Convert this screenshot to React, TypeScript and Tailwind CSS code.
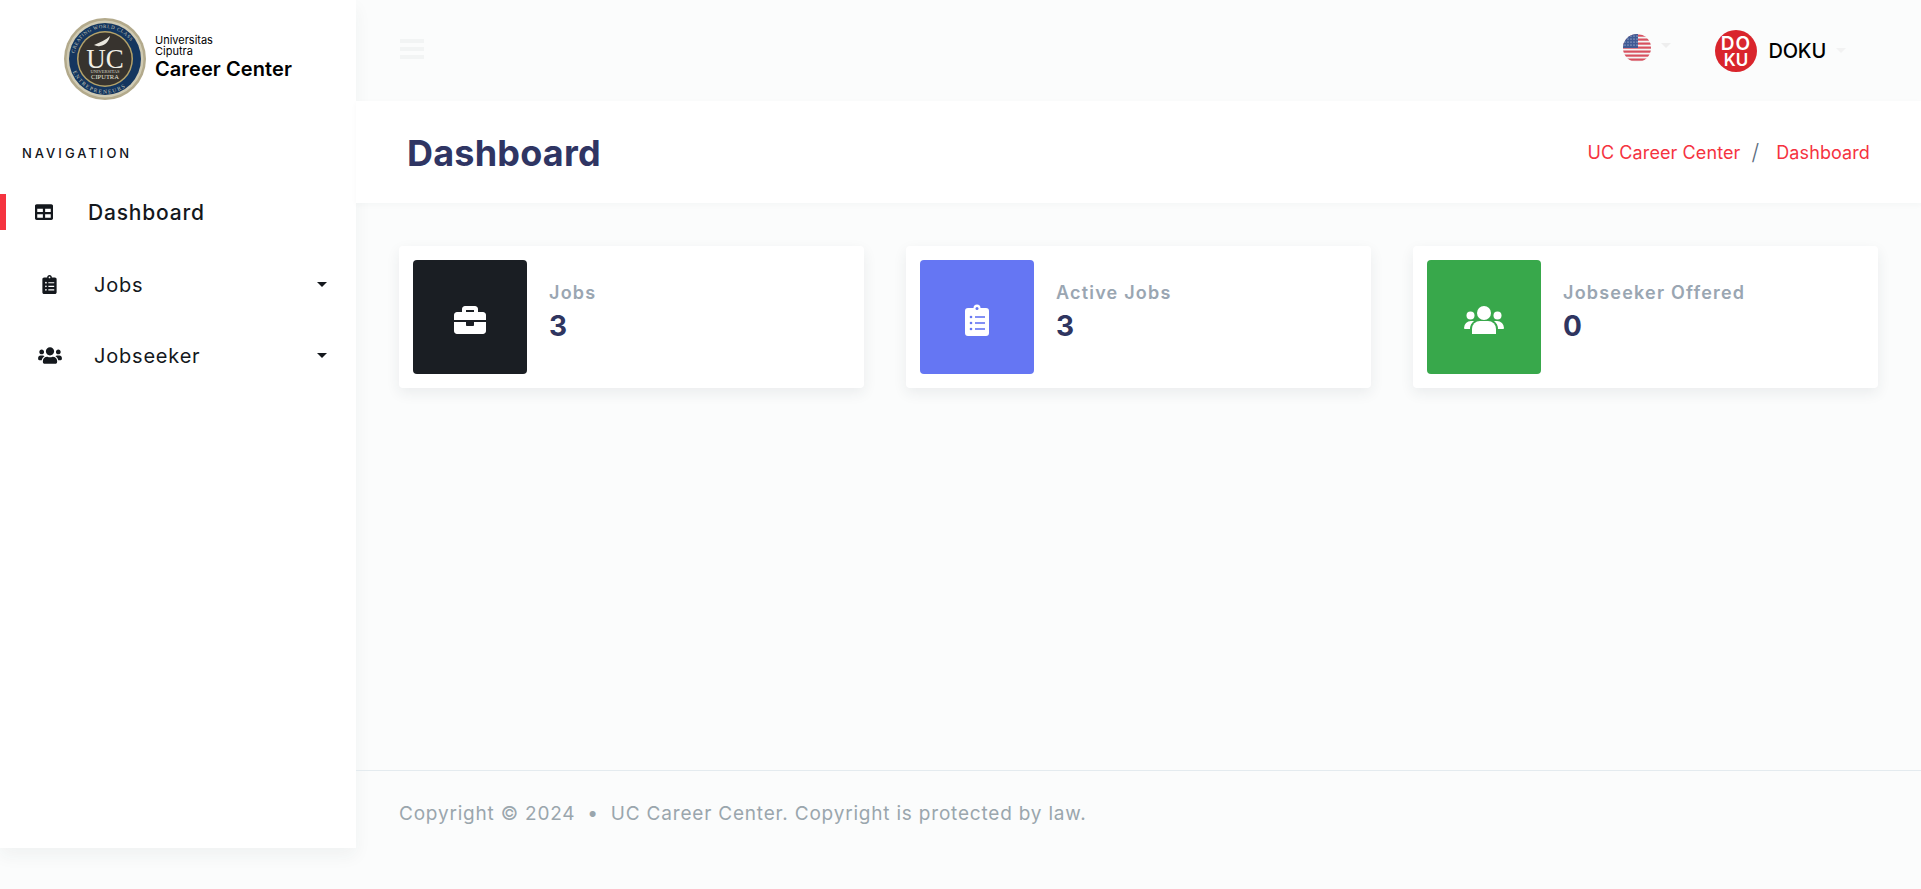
import React from "react";
import { FaBriefcase, FaClipboardList, FaTable, FaUsers } from "react-icons/fa";

const SealLogo = () => (
  <svg viewBox="0 0 82 82" className="w-[82px] h-[82px] shrink-0">
    <defs>
      <path id="sealTop" d="M41 41 m-31 0 a31 31 0 0 1 62 0" />
      <path id="sealBottom" d="M41 41 m-34.500 0 a34.500 34.500 0 0 0 69 0" />
    </defs>
    <circle cx="41" cy="41" r="41" fill="#b3aa8c" />
    <circle cx="41" cy="41" r="38.500" fill="#d0cbb4" />
    <circle cx="41" cy="41" r="36" fill="#14365f" />
    <circle cx="41" cy="41" r="28" fill="#b5a36a" />
    <circle cx="41" cy="41" r="26.500" fill="#37332e" />
    <text fontSize="5" fill="#c9c9b8" fontFamily="'Liberation Serif', serif" letterSpacing="0.6">
      <textPath href="#sealTop" startOffset="6%">CREATING WORLD CLASS</textPath>
    </text>
    <text fontSize="5.5" fill="#c9c9b8" fontFamily="'Liberation Serif', serif" letterSpacing="1.4">
      <textPath href="#sealBottom" startOffset="12%">ENTREPRENEURS</textPath>
    </text>
    <path d="M30 27 C36 24 42 22 46 18 C45 23 42 27 36 28 C34 28.500 32 28 30 27 Z" fill="#e9e7de" />
    <text x="41" y="50" textAnchor="middle" fontSize="27" fill="#f1efe6" fontFamily="'Liberation Serif', serif">UC</text>
    <text x="41" y="55" textAnchor="middle" fontSize="4.500" fill="#d8d6ca" fontFamily="'Liberation Serif', serif">UNIVERSITAS</text>
    <text x="41" y="61" textAnchor="middle" fontSize="6.500" fill="#e6e4da" fontFamily="'Liberation Serif', serif">CIPUTRA</text>
  </svg>
);

const FlagIcon = () => (
  <svg viewBox="0 0 28 28" className="w-[28px] h-[28px]">
    <defs>
      <clipPath id="flagClip">
        <circle cx="14" cy="14" r="14" />
      </clipPath>
    </defs>
    <g clipPath="url(#flagClip)">
      <rect width="28" height="28" fill="#f4f4f4" />
      {[0, 4, 8, 12, 16, 20, 24].map((y) => (
        <rect key={y} y={y + 0.5} width="28" height="2.200" fill="#d8505f" />
      ))}
      <rect width="15" height="14" fill="#3f5a94" />
      {[2, 5, 8, 11].map((y) =>
        [2, 5, 8, 11, 14].map((x) => (
          <circle key={`${x}-${y}`} cx={x} cy={y} r="0.600" fill="#dfe5f2" />
        ))
      )}
    </g>
  </svg>
);

const DokuLogo = () => (
  <svg viewBox="0 0 42 42" className="w-[42px] h-[42px]">
    <circle cx="21" cy="21" r="21" fill="#d9252c" />
    <text x="21" y="20" textAnchor="middle" fontSize="19" fontWeight="600" letterSpacing="1" fill="#fff" fontFamily="Inter, sans-serif">
      DO
    </text>
    <text x="21" y="36" textAnchor="middle" fontSize="17" fontWeight="600" fill="#fff" fontFamily="Inter, sans-serif">
      KU
    </text>
  </svg>
);

const ClipboardIcon = () => (
  <svg viewBox="0 0 24 32" className="w-[24px] h-[32px]">
    <path
      fill="#fff"
      d="M3 4h5.500a3.500 3.500 0 0 1 7 0H21a3 3 0 0 1 3 3v22a3 3 0 0 1-3 3H3a3 3 0 0 1-3-3V7a3 3 0 0 1 3-3z"
    />
    <circle cx="12" cy="4.500" r="1.500" fill="#6576f3" />
    {[13, 19, 25].map((y) => (
      <g key={y}>
        <circle cx="6" cy={y} r="1.300" fill="#6576f3" />
        <rect x="10" y={y - 0.8} width="10" height="1.600" fill="#6576f3" />
      </g>
    ))}
  </svg>
);

const UsersIcon = () => (
  <svg viewBox="0 0 40 28" className="w-[40px] h-[28px]" fill="#fff">
    <circle cx="20" cy="7" r="7" />
    <circle cx="6.500" cy="9.500" r="4" />
    <circle cx="33.500" cy="9.500" r="4" />
    <path d="M8 28v-5a8 8 0 0 1 8-8h8a8 8 0 0 1 8 8v5z" />
    <path d="M0 22a7 7 0 0 1 7-7h3a10 10 0 0 0-4 8H0.500z" />
    <path d="M40 22a7 7 0 0 0-7-7h-3a10 10 0 0 1 4 8h5.500z" />
  </svg>
);

const Caret = ({ className }: { className: string }) => (
  <span className={`w-0 h-0 border-x-[5px] border-x-transparent border-t-[5px] ${className}`} />
);

const StatCard = ({
  label,
  value,
  color,
  icon,
}: {
  label: string;
  value: string;
  color: string;
  icon: React.ReactNode;
}) => (
  <div className="flex items-center gap-[22px] h-[142px] p-[14px] bg-white rounded-[4px] shadow-[0_5px_14px_rgba(40,50,60,0.08)]">
    <div className={`flex items-center justify-center w-[114px] h-[114px] pt-[5px] rounded-[4px] ${color}`}>{icon}</div>
    <div className="pb-[8px]">
      <p className="text-[18px] leading-[26px] font-semibold tracking-[1.2px] text-[#9aa6b2]">{label}</p>
      <p className="text-[28px] leading-[41px] font-bold text-[#2f3560]">{value}</p>
    </div>
  </div>
);

export default function App() {
  return (
    <div className="flex items-start min-h-[889px] bg-[#fbfcfc] font-['Inter','Liberation_Sans',sans-serif]">
      <aside className="w-[356px] h-[848px] shrink-0 bg-white shadow-[0_8px_16px_rgba(40,50,60,0.05)]">
        <div className="flex items-center justify-center gap-[9px] h-[101px] pt-[16px]">
          <SealLogo />
          <div className="text-black mb-[2px]">
            <p className="text-[11px] leading-[11px] w-[70px]">Universitas Ciputra</p>
            <p className="text-[20px] leading-[24px] font-semibold tracking-[0.1px]">Career Center</p>
          </div>
        </div>
        <p className="pl-[22px] mt-[44px] text-[13px] leading-[16px] font-medium tracking-[3px] text-[#12151c]">
          NAVIGATION
        </p>
        <nav className="mt-[33px]">
          <div className="flex items-center h-[36px] border-l-[6px] border-[#f5333f] pl-[28px] text-[#14181d]">
            <FaTable className="w-[20px] h-[18px]" />
            <span className="ml-[34px] pt-[2px] text-[21px] font-medium tracking-[0.8px]">Dashboard</span>
          </div>
          <div className="flex items-center h-[36px] mt-[36px] pl-[42px] pr-[29px] text-[#14181d]">
            <FaClipboardList className="w-[15px] h-[19px]" />
            <span className="ml-[37px] pt-[2px] flex-1 text-[20px] tracking-[0.8px]">Jobs</span>
            <Caret className="border-t-[#14181d]" />
          </div>
          <div className="flex items-center h-[36px] mt-[35px] pl-[38px] pr-[29px] text-[#14181d]">
            <FaUsers className="w-[24px] h-[19px]" />
            <span className="ml-[32px] pt-[2px] flex-1 text-[20px] tracking-[0.8px]">Jobseeker</span>
            <Caret className="border-t-[#14181d]" />
          </div>
        </nav>
      </aside>

      <main className="flex-1 flex flex-col min-h-[889px]">
        <header className="flex items-center h-[101px] pl-[44px] pr-[75px]">
          <div className="flex flex-col gap-[4px] w-[24px] mb-[3px]">
            <span className="h-[4px] bg-[#f2f4f4]" />
            <span className="h-[4px] bg-[#f2f4f4]" />
            <span className="h-[4px] bg-[#f2f4f4]" />
          </div>
          <div className="flex items-center ml-auto">
            <span className="mb-[5px]">
              <FlagIcon />
            </span>
            <Caret className="ml-[10px] mb-[10px] border-t-[#eeeeee]" />
            <span className="ml-[44px]">
              <DokuLogo />
            </span>
            <span className="ml-[11px] text-[20px] font-medium tracking-[-0.2px] text-black">DOKU</span>
            <Caret className="ml-[10px] border-t-[#f2f2f2]" />
          </div>
        </header>

        <div className="flex items-center justify-between h-[102px] pl-[51px] pr-[51px] pt-[2px] bg-white shadow-[0_2px_6px_rgba(40,50,60,0.03)]">
          <h1 className="text-[36px] font-bold text-[#2f3563] tracking-[0.2px]">Dashboard</h1>
          <div className="flex items-center text-[18px] tracking-[0.1px] text-[#f5333f] mb-[2px]">
            <span>UC Career Center</span>
            <span className="ml-[11px] mr-[17px] text-[22px] leading-[24px] font-light text-[#5b6b7d]">/</span>
            <span>Dashboard</span>
          </div>
        </div>

        <div className="flex-1 grid grid-cols-3 content-start gap-[42px] px-[43px] pt-[43px]">
          <StatCard label="Jobs" value="3" color="bg-[#1a1e23]" icon={<FaBriefcase className="w-[32px] h-[32px] text-white" />} />
          <StatCard label="Active Jobs" value="3" color="bg-[#6576f3]" icon={<ClipboardIcon />} />
          <StatCard label="Jobseeker Offered" value="0" color="bg-[#38a84b]" icon={<UsersIcon />} />
        </div>

        <footer className="flex items-center gap-[12px] h-[119px] pl-[43px] pb-[32px] border-t border-[#e4ebef] text-[19px] tracking-[0.8px] text-[#9aa6ad]">
          <span>Copyright © 2024</span>
          <span>•</span>
          <span>UC Career Center. Copyright is protected by law.</span>
        </footer>
      </main>
    </div>
  );
}
